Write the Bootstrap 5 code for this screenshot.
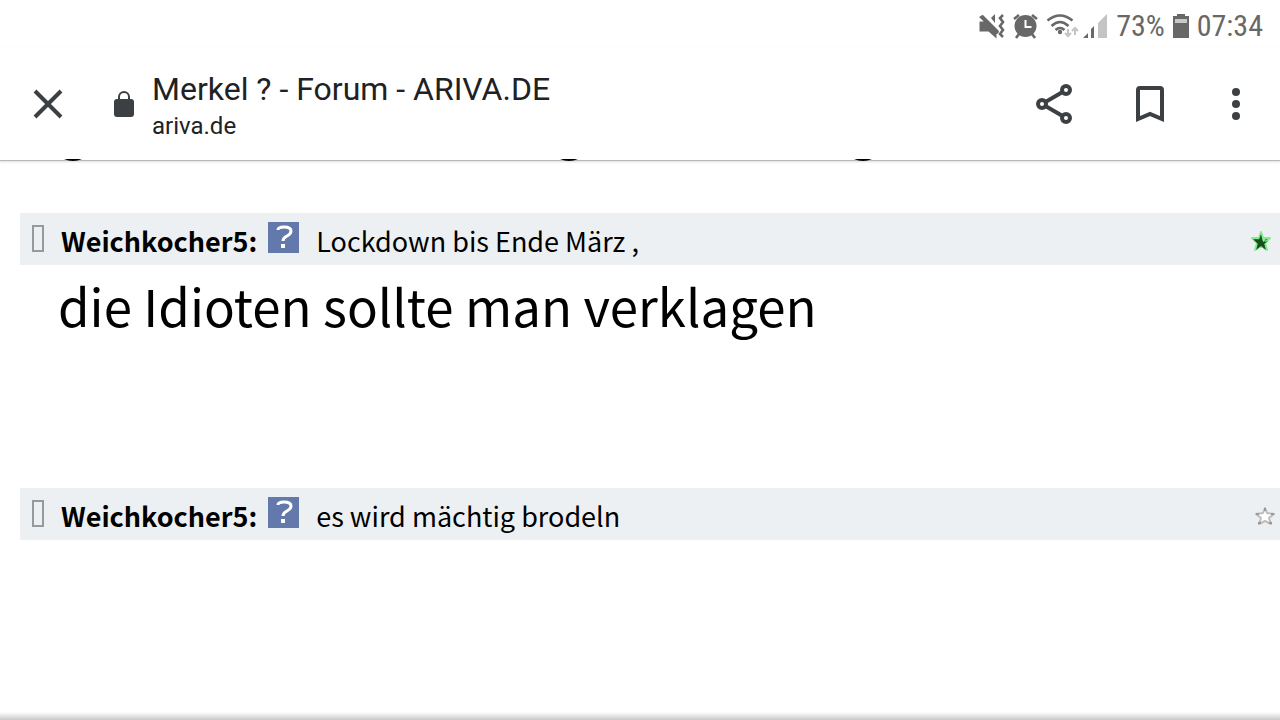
<!DOCTYPE html>
<html lang="de">
<head>
<meta charset="utf-8">
<meta name="viewport" content="width=device-width, initial-scale=1">
<title>Merkel ? - Forum - ARIVA.DE</title>
<link href="https://cdn.jsdelivr.net/npm/bootstrap@5.3.0/dist/css/bootstrap.min.css" rel="stylesheet">
<style>
body { font-family: "Noto Sans CJK SC", sans-serif; color: #000; background: #fff; }
.status { height: 48px; padding-right: 17px; padding-top: 4px; color: #686868; font: 400 30px/44px "Roboto Condensed", "Liberation Sans Narrow", Roboto, sans-serif; }
.toolbar { height: 113px; border-bottom: 1px solid #b8bab9; box-shadow: 0 1px 2px #ddd; font-family: Roboto, sans-serif; color: #202124; }
.toolbar button { color: #3c4043; }
.close-tab { width: 48px; height: 48px; }
.lock { margin-left: 42px; }
.page-id { margin-left: 18px; padding-top: 4px; }
.title { font-size: 32px; line-height: 40px; font-weight: 400; }
.host { font-size: 24px; line-height: 34px; }
.actions { gap: 64px; }
.menu { margin-left: 4px; }
.tails { left: 0; top: 159px; }
.thread { padding: 52px 0 0 20px; }
.post { min-height: 275px; }
.post-head { height: 52px; background: #edf0f3; font-size: 27px; line-height: 52px; padding: 4px 8px 0 12px; }
.post:last-child .post-head { padding-right: 4px; }
.tofu { width: 12px; height: 27px; border: 2px solid #999; margin-bottom: 6px; }
.author { color: #000; margin-left: 17px; }
.fb { margin: 0 17px 8px 11px; }
.post-text { font-size: 51px; line-height: 80px; padding-left: 38px; }
.post:last-child { min-height: 0; }
.page-end { height: 8px; background: linear-gradient(#fff, #c9c9c9); }
</style>
</head>
<body class="d-flex flex-column min-vh-100 position-relative">
<div class="status d-flex justify-content-end align-items-center">
  <svg width="140" height="32" viewBox="976 9 140 32" fill="#686868" aria-hidden="true">
    <path d="M979.500 20.500h7l10 10v7l-8-7h-9zM991 17l4-4v9zM983 14l16 16-2 3-18-17z"/>
    <path d="M981 15l17 17" stroke="#686868" stroke-width="2.600"/>
    <path d="M1003 14l-3 3 3 4-3 4 3 4-3 4 3 3" fill="none" stroke="#686868" stroke-width="2.600"/>
    <path d="M985 14l10 10" stroke="#fff" stroke-width="2"/>
    <circle cx="1025.500" cy="25" r="11"/>
    <path d="M1014 18l5-4M1032 14l5 4M1019 33l-3 4M1032 33l3 4" stroke="#686868" stroke-width="2.600"/>
    <path d="M1025.500 19v7h6" fill="none" stroke="#fff" stroke-width="2"/>
    <path d="M1047.500 19.500q12.500-10 25 0M1051.500 25q8.500-8 17 0M1055.500 29q4.500-4 9 0" fill="none" stroke="#686868" stroke-width="2.600"/>
    <circle cx="1060" cy="31" r="2.200"/>
    <path d="M1068 28v7m-3-3l3 3 3-3M1075 34v-7m-3 3l3-3 3 3" fill="none" stroke="#c4c4c4" stroke-width="2"/>
    <path d="M1083 37l5-5v5zM1091 37v-9l3-3v12z"/>
    <path d="M1098 37V22l9-9v24z" fill="#c4c4c4"/>
  </svg>
  <span>73%</span>
  <svg class="mx-2" width="16" height="24" viewBox="0 0 16 24" aria-hidden="true"><path d="M4 0h8v2h4v22H0V2h4z" fill="#686868"/><path d="M2 5h12v4H2z" fill="#c9c9c9"/></svg>
  <time>07:34</time>
</div>
<header class="toolbar d-flex align-items-center ps-4 pe-4">
  <button class="close-tab btn p-0 border-0 d-flex align-items-center justify-content-center" aria-label="Schließen">
    <svg width="30" height="30" viewBox="0 0 30 30"><path d="M2 2l26 26M28 2L2 28" stroke="currentColor" stroke-width="4"/></svg>
  </button>
  <svg class="lock" width="20" height="28" viewBox="0 0 20 28" fill="#3c4043" aria-hidden="true"><rect y="9" width="20" height="18" rx="3"/><path d="M5 10V7a5 5 0 0 1 10 0v3" fill="none" stroke="#3c4043" stroke-width="2"/></svg>
  <div class="page-id flex-grow-1 text-nowrap">
    <h1 class="title m-0">Merkel ? - Forum - ARIVA.DE</h1>
    <div class="host">ariva.de</div>
  </div>
  <div class="actions d-flex align-items-center me-3 pe-0">
    <button class="btn p-0 border-0 d-flex" aria-label="Teilen"><svg width="36" height="40" viewBox="0 0 36 40" fill="none" stroke="currentColor" stroke-width="4"><path d="M30 6L6 20l24 14"/><g fill="#fff"><circle cx="30" cy="6" r="4"/><circle cx="6" cy="20" r="4"/><circle cx="30" cy="34" r="4"/></g></svg></button>
    <button class="btn p-0 border-0 d-flex" aria-label="Lesezeichen"><svg width="28" height="36" viewBox="0 0 28 36" fill="none" stroke="currentColor" stroke-width="4"><path d="M2 33V4q0-2 2-2h20q2 0 2 2v29l-12-5z"/></svg></button>
    <button class="menu btn p-0 border-0 d-flex" aria-label="Menü"><svg width="8" height="32" viewBox="0 0 8 32" fill="currentColor"><circle cx="4" cy="4" r="4"/><circle cx="4" cy="16" r="4"/><circle cx="4" cy="28" r="4"/></svg></button>
  </div>
</header>
<svg class="tails position-absolute" width="880" height="3" aria-hidden="true"><path d="M64 0q9 4 18 0M560 0q9 4 18 0M854 0q9 4 18 0"/></svg>
<main class="thread flex-grow-1">
  <article class="post">
    <div class="post-head d-flex align-items-center">
      <span class="tofu"></span>
      <a href="#" class="author fw-bold text-decoration-none">Weichkocher5:</a>
      <svg class="fb" width="31" height="31" viewBox="0 0 31 31" aria-hidden="true"><path d="M0 0h31v31H0z" fill="#6379ab"/><path d="M10 8q0-3 6-3 7 0 7 4 0 3-4 5-4 2-4 5" fill="none" stroke="#fff" stroke-width="3"/><path d="M13 22h4v4h-4z" fill="#fff"/></svg>
      <span class="flex-grow-1">Lockdown bis Ende März ,</span>
      <svg width="22" height="24" viewBox="0 0 22 24" aria-label="Bewertet"><path d="M11 3l2 6 7 0-5 5 2 7-6-4-6 4 2-7-5-5 7 0z" fill="#2c8834" stroke="#84ea92" stroke-width="2" stroke-linejoin="round"/><path d="M3 10l6 1 2-6 1 6 3 2 3-1-4 3 2 6-5-4-5 4 2-6z" fill="#17501c"/><path d="M12 8l4 3-3 2z" fill="#8df09a"/></svg>
    </div>
    <p class="post-text m-0">die Idioten sollte man verklagen</p>
  </article>
  <article class="post">
    <div class="post-head d-flex align-items-center">
      <span class="tofu"></span>
      <a href="#" class="author fw-bold text-decoration-none">Weichkocher5:</a>
      <svg class="fb" width="31" height="31" viewBox="0 0 31 31" aria-hidden="true"><path d="M0 0h31v31H0z" fill="#6379ab"/><path d="M10 8q0-3 6-3 7 0 7 4 0 3-4 5-4 2-4 5" fill="none" stroke="#fff" stroke-width="3"/><path d="M13 22h4v4h-4z" fill="#fff"/></svg>
      <span class="flex-grow-1">es wird mächtig brodeln</span>
      <svg width="22" height="24" viewBox="0 0 22 24" aria-label="Nicht bewertet"><path d="M11 4l2 5 7 1-5 4 2 6-6-3-6 3 2-6-5-4 7-1z" fill="#fff" stroke="#bdbdbd" stroke-width="2" stroke-linejoin="round"/><path d="M10 4h2v3h-2zM2 9h3v2H2zM17 9h3v2h-3zM4 18h3v2H4zM15 18h3v2h-3z" fill="#999"/></svg>
    </div>
  </article>
</main>
<div class="page-end"></div>
<script src="https://cdn.jsdelivr.net/npm/bootstrap@5.3.0/dist/js/bootstrap.bundle.min.js"></script>
</body>
</html>
